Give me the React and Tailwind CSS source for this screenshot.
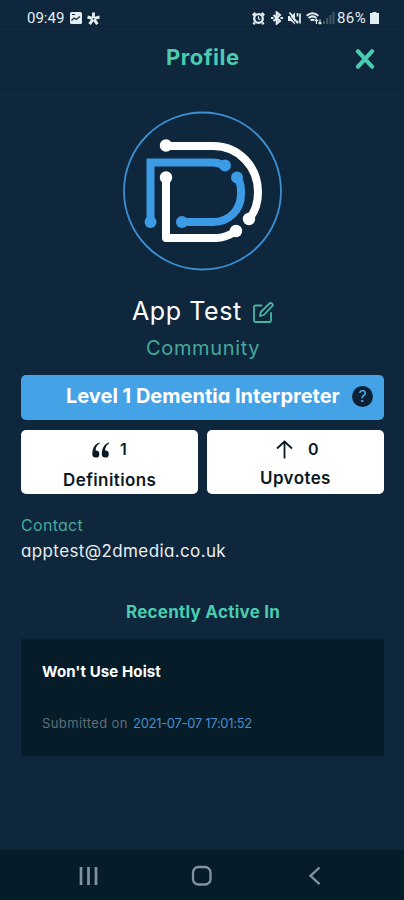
import React from "react";

function StatusBar() {
  return (
    <div className="flex h-[26px] items-start justify-between pl-[27px] pr-[25px] pt-[9px] text-[#e4edf2]">
      <div className="flex h-[18px] items-center">
        <span className="w-[37px] whitespace-nowrap font-[Roboto] text-[15px] leading-[18px]">09:49</span>
        <svg className="ml-[6px]" width="12" height="12" viewBox="0 0 12 12">
          <rect width="12" height="12" rx="1.5" fill="currentColor" />
          <path d="M1.5 8.5 4 6l2.200 1.500L10 4.500" stroke="#0e273c" strokeWidth="1.1" fill="none" />
          <path d="M2 2.5h3" stroke="#0e273c" strokeWidth="1" />
        </svg>
        <svg className="ml-[5px]" width="13" height="13" viewBox="0 0 13 13" stroke="currentColor" strokeWidth="2.9" fill="none">
          <path d="M6.5 0.5V6.5M0.5 5 6.5 6.7 12.5 5M2.6 12.2 6.5 6.7 10.4 12.2" />
          <circle cx="6.5" cy="6.8" r="0.9" fill="#0e273c" stroke="none" />
        </svg>
      </div>
      <div className="flex h-[18px] items-center">
        <svg width="13" height="13" viewBox="0 0 13 13" fill="none" stroke="currentColor" strokeWidth="2.3">
          <circle cx="6.5" cy="6.5" r="4.3" />
          <path d="M0.7 3.3 3.4 0.9M12.3 3.3 9.6 0.9M2.8 10.5 1.4 12.2M10.2 10.5l1.4 1.7" />
          <path d="M6.5 4.3v2.4l1.6 1" strokeWidth="1.2" />
        </svg>
        <svg className="ml-[6px]" width="12" height="14" viewBox="0 0 12 14" fill="none" stroke="currentColor" strokeWidth="2">
          <path d="m2.500 4 6.500 6-3.300 2.700V1.300L9 4l-6.500 6" />
          <path d="M0 7h2.500M9.500 7H12" />
        </svg>
        <svg className="ml-[5px]" width="13" height="13" viewBox="0 0 13 13" fill="currentColor">
          <path d="M0 4h3l4-3.4v11.8L3 9H0z" />
          <path d="m0.5 2 8 10.500" stroke="#0e273c" strokeWidth="1" />
          <path d="m1.5 0.5 8 10.5M9.500 1v3.500M12 1.5v10M9.5 8.5v3" stroke="currentColor" strokeWidth="1.7" />
        </svg>
        <svg className="ml-[5px]" width="16" height="13" viewBox="0 0 16 13" fill="none" stroke="currentColor">
          <path d="M0.7 3.7Q6.5-1.3 12.3 3.7M2.6 6Q6.5 2.8 10.4 6M4.6 8.3Q6.5 7 8.4 8.3" strokeWidth="2" />
          <path d="M10.5 12V7.5M9 9l1.5-1.7L12 9M14 7.5V12M12.5 10.5 14 12l1.5-1.5" strokeWidth="1.2" />
        </svg>
        <svg className="ml-[1px]" width="12" height="12" viewBox="0 0 12 12" fill="#425868">
          <path d="M0 9h2v3H0zM3.2 6h2v6h-2zM6.4 3h2v9h-2zM9.5 0h2v12h-2z" />
        </svg>
        <span className="ml-[2px] w-[31px] whitespace-nowrap font-[Roboto] text-[15px] leading-[18px] tracking-[0.4px]">86%</span>
        <svg className="ml-[2px]" width="9" height="12" viewBox="0 0 9 12" fill="currentColor">
          <path d="M2.5 0h4v1H9v11H0V1h2.5z" />
        </svg>
      </div>
    </div>
  );
}

function Logo() {
  return (
    <svg width="180" height="180" viewBox="0 0 180 180" fill="none" strokeWidth="8">
      <circle cx="90.5" cy="91" r="78.5" stroke="#3d8fd3" strokeWidth="1.8" />
      <g stroke="#fff">
        <path d="M54 46h47c26 0 45 21 45 46 0 11-3 20-9 27" />
        <path d="M54 77v61h50c8 0 14-3 20-7" strokeLinejoin="round" />
      </g>
      <g fill="#fff">
        <circle cx="54" cy="45.5" r="6.2" />
        <circle cx="137" cy="119" r="6.2" />
        <circle cx="54" cy="77.5" r="6.2" />
        <circle cx="124" cy="131" r="6.2" />
      </g>
      <g stroke="#3b9ce5">
        <path d="M38.5 122V62.5H101c4 0 7 1 11 3" />
        <path d="M125 78c4 5 4 9 4 16 0 16-12 28-28 28H70" />
      </g>
      <g fill="#3b9ce5">
        <circle cx="38.5" cy="122" r="6" />
        <circle cx="113" cy="65.5" r="6" />
        <circle cx="125" cy="77.5" r="6" />
        <circle cx="70" cy="122" r="6" />
      </g>
    </svg>
  );
}

function QuoteIcon() {
  return (
    <svg className="mt-[3px]" width="18" height="17" viewBox="0 0 18 17" fill="currentColor">
      <path d="M7.300 0.500C2.700 2 0.300 6.500 0.300 12.300a3.500 3.500 0 1 0 3.300-3.700C3.700 5.300 5 3 7.800 1.300z" />
      <path d="M16.800 0.500C12.200 2 9.800 6.500 9.800 12.300a3.500 3.500 0 1 0 3.300-3.700C13.200 5.300 14.500 3 17.300 1.300z" />
    </svg>
  );
}

export default function App() {
  return (
    <div className="flex h-[900px] w-[404px] flex-col overflow-hidden bg-[#0e273c] font-[Inter,sans-serif] whitespace-nowrap [font-feature-settings:'cv11']">
      <StatusBar />
      <header className="flex h-[64px] items-center border-t border-b border-t-[#0b2134] border-b-[#0b2336] pl-[166px] pr-[29px] pb-[2px]">
        <h1 className="text-[22px] font-bold leading-7 tracking-[0.5px] text-[#4bcbb0]">Profile</h1>
        <svg className="mt-[4px] ml-auto" width="20" height="20" viewBox="0 0 20 20" stroke="#4bcbb0" strokeWidth="4.200" strokeLinecap="round">
          <path d="m3 2.300 14 15.400M17 2.300 3 17.700" />
        </svg>
      </header>
      <main className="flex flex-1 flex-col pr-[20px] pl-[21px]">
        <div className="mt-[10px] flex h-[180px] pl-[91px]">
          <Logo />
        </div>
        <div className="mt-[14px] flex h-[34px] items-center pl-[111px]">
          <h2 className="w-[121px] text-[25px] leading-[34px] tracking-[0.6px] text-white">App Test</h2>
          <svg className="mt-[3px]" width="21" height="21" viewBox="0 0 21 21" fill="none" stroke="#4bb5a3" strokeWidth="1.8" strokeLinejoin="round" strokeLinecap="round">
            <path d="M8.500 3.500H2.500Q1 3.500 1 5V18.500Q1 20 2.500 20H16.500Q18 20 18 18.500V11" />
            <path d="m7 14 .8-4 8.700-8.500q1.200-1 2.500.2t.2 2.500L10.800 13z" />
          </svg>
        </div>
        <p className="mt-[6px] pl-[125px] text-[20px] leading-[28px] tracking-[0.65px] text-[#46a99a]">Community</p>
        <div className="mt-[13px] flex h-[45px] items-center rounded-[5px] bg-[#44a2e6] pr-[11px] pb-[3px] pl-[45px]">
          <span className="text-[20px] font-bold text-white">Level 1 Dementia Interpreter</span>
          <span className="ml-auto flex size-[21px] items-center justify-center rounded-full bg-[#0b2236] text-[16px] leading-none text-[#65b0e5]">?</span>
        </div>
        <div className="mt-[10px] flex gap-[9px] text-[#0b1925]">
          <div className="h-[64px] w-[177px] rounded-[5px] bg-white">
            <div className="flex h-[37px] items-center pl-[71px]">
              <QuoteIcon />
              <span className="ml-[10px] text-[16px] font-semibold">1</span>
            </div>
            <p className="mt-px pl-[42px] text-[17px] font-semibold leading-6 tracking-[0.4px]">Definitions</p>
          </div>
          <div className="h-[64px] w-[177px] rounded-[5px] bg-white">
            <div className="flex h-[37px] items-center pl-[69px]">
              <svg className="mt-[2px]" width="17" height="19" viewBox="0 0 17 19" fill="none" stroke="currentColor" strokeWidth="1.800">
                <path d="M8.500 18.500V1.500M1 8.500l7.500-7 7.500 7" />
              </svg>
              <span className="ml-[15px] text-[16px] font-semibold">0</span>
            </div>
            <p className="-mt-[1px] pl-[53px] text-[17px] font-semibold leading-6 tracking-[0.4px]">Upvotes</p>
          </div>
        </div>
        <p className="mt-[20px] text-[16px] leading-[22px] tracking-[0.3px] text-[#46a99a]">Contact</p>
        <p className="mt-[3px] text-[17px] leading-[24px] tracking-[0.38px] text-[#e9eef0]">apptest@2dmedia.co.uk</p>
        <h3 className="mt-[37px] pl-[105px] text-[17px] font-bold leading-[24px] tracking-[0.25px] text-[#4bcbb0]">Recently Active In</h3>
        <article className="mt-[15px] h-[117px] w-[363px] bg-[#061c29] pt-[22px] pl-[21px]">
          <h4 className="text-[15px] font-bold leading-[22px] tracking-[0.1px] text-white">Won't Use Hoist</h4>
          <div className="mt-[30px] flex text-[13px] leading-[20px]">
            <span className="w-[91px] tracking-[0.38px] text-[#5e6f7a]">Submitted on</span>
            <span className="tracking-[-0.3px] text-[#4b8dcc]">2021-07-07 17:01:52</span>
          </div>
        </article>
      </main>
      <nav className="h-[50px] bg-[#061c29] text-[#8392a0]">
        <svg width="404" height="50" viewBox="0 0 404 50" fill="none" stroke="currentColor">
          <path d="M81 17v18M88.500 17v18M96 17v18" strokeWidth="2.700" />
          <rect x="193" y="17" width="17.500" height="17.500" rx="5.500" strokeWidth="2.300" />
          <path d="m319.500 17.500-9 8.300 9 8.300" strokeWidth="2.300" />
        </svg>
      </nav>
    </div>
  );
}
